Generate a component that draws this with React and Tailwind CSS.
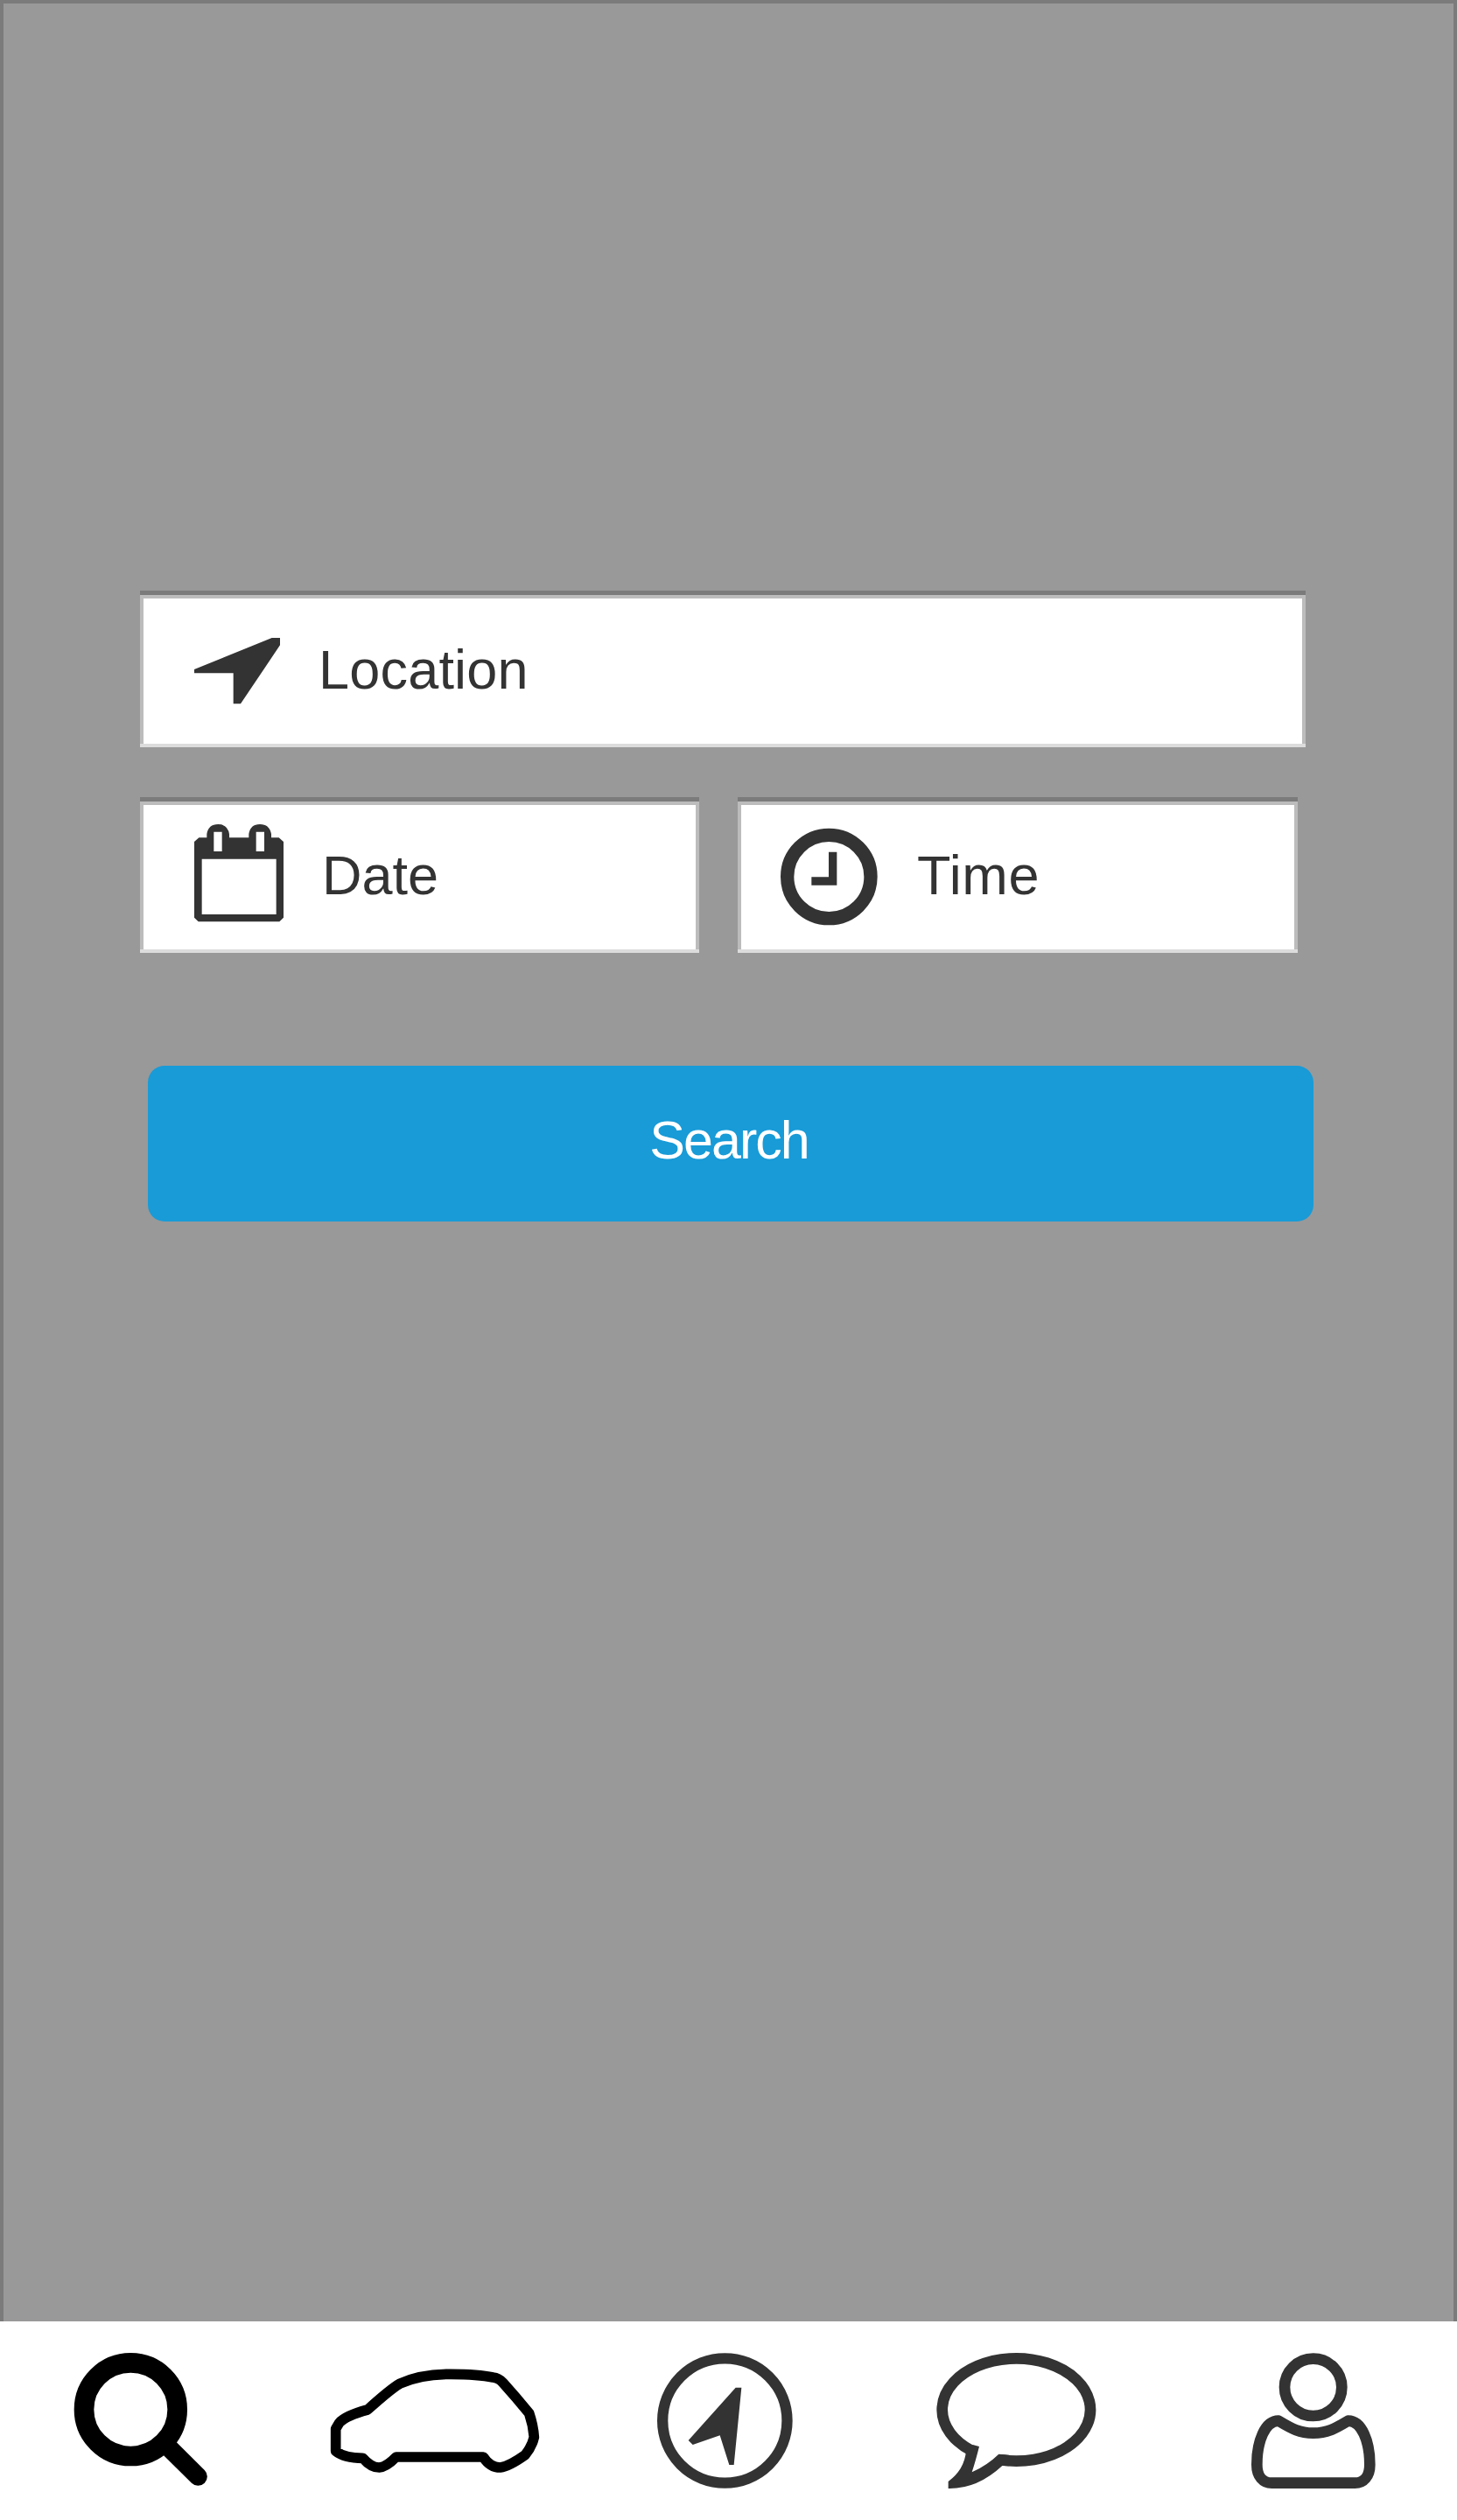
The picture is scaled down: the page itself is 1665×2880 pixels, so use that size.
const fieldClass =
  "flex bg-white text-[#333] shadow-[inset_0_5px_#7b7b7b,inset_0_-4px_#dcdcdc,inset_0_9px_#bcbcbc,inset_4px_0_#bcbcbc,inset_-4px_0_#bcbcbc]";

function ArrowIcon() {
  return (
    <svg className="ml-[61px] mt-[53px] h-[78px] w-[101px] shrink-0" viewBox="243 204 303 234" fill="currentColor">
      <path d="M246 315L512 207H540V232L405 433H380V328H246Z" />
    </svg>
  );
}

function CalendarIcon() {
  return (
    <svg className="ml-[61px] mt-[30px] h-[114px] w-[104px] shrink-0" viewBox="243 153 312 342" fill="currentColor">
      <path
        fillRule="evenodd"
        d="M262 202H289V190Q294 156 328 156Q361 156 366 190V202H433V190Q438 156 471 156Q504 156 510 190V202H536L552 216V476L538 490H260L246 476V216ZM272 275V465H527V275ZM313 182V249H341V182ZM458 182V249H486V182Z"
      />
    </svg>
  );
}

function ClockIcon() {
  return (
    <svg className="ml-[48px] mt-[34px] h-[114px] w-[114px] shrink-0" viewBox="336 165 342 342" fill="none" stroke="currentColor">
      <circle cx="505" cy="336" r="143" strokeWidth="46" />
      <path d="M518 251V351H445" strokeWidth="28" />
    </svg>
  );
}

function SearchIcon() {
  return (
    <svg className="ml-[84px] h-[157px] w-[156px]" viewBox="252 144 468 471" fill="none" stroke="black">
      <circle cx="448" cy="341" r="160" strokeWidth="68" />
      <path d="M560 453L679 571" strokeWidth="63" strokeLinecap="round" />
    </svg>
  );
}

function CarIcon() {
  return (
    <svg className="ml-[136px] mt-[17px] h-[123px] w-[242px]" viewBox="108 195 726 369" fill="none" stroke="black">
      <path
        d="M131 407V484Q160 508 224 508Q252 540 280 540Q305 538 338 504H637Q660 540 695 540Q725 536 780 497Q803 470 811 436Q808 395 794 354Q750 300 704 249Q690 233 670 231Q620 220 525 220Q420 220 350 253Q320 270 240 342Q165 362 143 387Z"
        strokeWidth="35"
        strokeLinejoin="round"
      />
    </svg>
  );
}

function CompassIcon() {
  return (
    <svg className="ml-[132px] h-[157px] w-[157px]" viewBox="210 144 471 471">
      <circle cx="445" cy="379.500" r="213.500" fill="none" stroke="#333" strokeWidth="37" />
      <path d="M482 266H502L476 531H460L428 430L335 462L320 447Z" fill="#333" />
    </svg>
  );
}

function ChatIcon() {
  return (
    <svg className="ml-[162px] h-[157px] w-[184px]" viewBox="147 144 552 471">
      <path d="M370 514A254 176 0 1 0 272 483" fill="none" stroke="#333" strokeWidth="38" />
      <path d="M252 484Q246 548 191 588V612Q290 614 376 534L400 535V497L364 494Q325 532 272 556Q284 520 297 468L275 462Z" fill="#333" />
    </svg>
  );
}

function UserIcon() {
  return (
    <svg className="ml-[176px] h-[157px] w-[144px]" viewBox="252 144 432 471" fill="none" stroke="#333" strokeWidth="38" strokeLinejoin="round">
      <circle cx="467" cy="265" r="98" />
      <path d="M348 380C395 408 420 422 467 422C515 422 540 408 587 380C633 380 661 450 661 530C661 570 640 593 610 593H325C295 593 274 570 274 530C274 450 302 380 348 380Z" />
    </svg>
  );
}

export default function App() {
  return (
    <div className="flex h-[2880px] w-[1665px] flex-col bg-white font-['Liberation_Sans',Arial,sans-serif] text-[63px] leading-[72px]">
      <main className="h-[2653px] border-x-4 border-t-4 border-[#7b7b7b] bg-[#999] pl-[156px] pt-[671px]">
        <div className={`${fieldClass} h-[179px] w-[1332px]`}>
          <ArrowIcon />
          <span className="ml-[42px] mt-[54px] tracking-[0.2px]">Location</span>
        </div>
        <div className="mt-[57px] flex gap-[44px]">
          <div className={`${fieldClass} h-[178px] w-[639px]`}>
            <CalendarIcon />
            <span className="ml-[43px] mt-[53px]">Date</span>
          </div>
          <div className={`${fieldClass} h-[178px] w-[640px]`}>
            <ClockIcon />
            <span className="ml-[43px] mt-[53px] tracking-[0.6px]">Time</span>
          </div>
        </div>
        <button className="ml-[9px] mt-[129px] flex h-[178px] w-[1332px] justify-center rounded-[19px] bg-[#189bd7] pr-[4px] pt-[49px] text-[61px] tracking-[-2px] text-white">
          Search
        </button>
      </main>
      <nav className="flex h-[227px] items-start pt-[35px]">
        <SearchIcon />
        <CarIcon />
        <CompassIcon />
        <ChatIcon />
        <UserIcon />
      </nav>
    </div>
  );
}
